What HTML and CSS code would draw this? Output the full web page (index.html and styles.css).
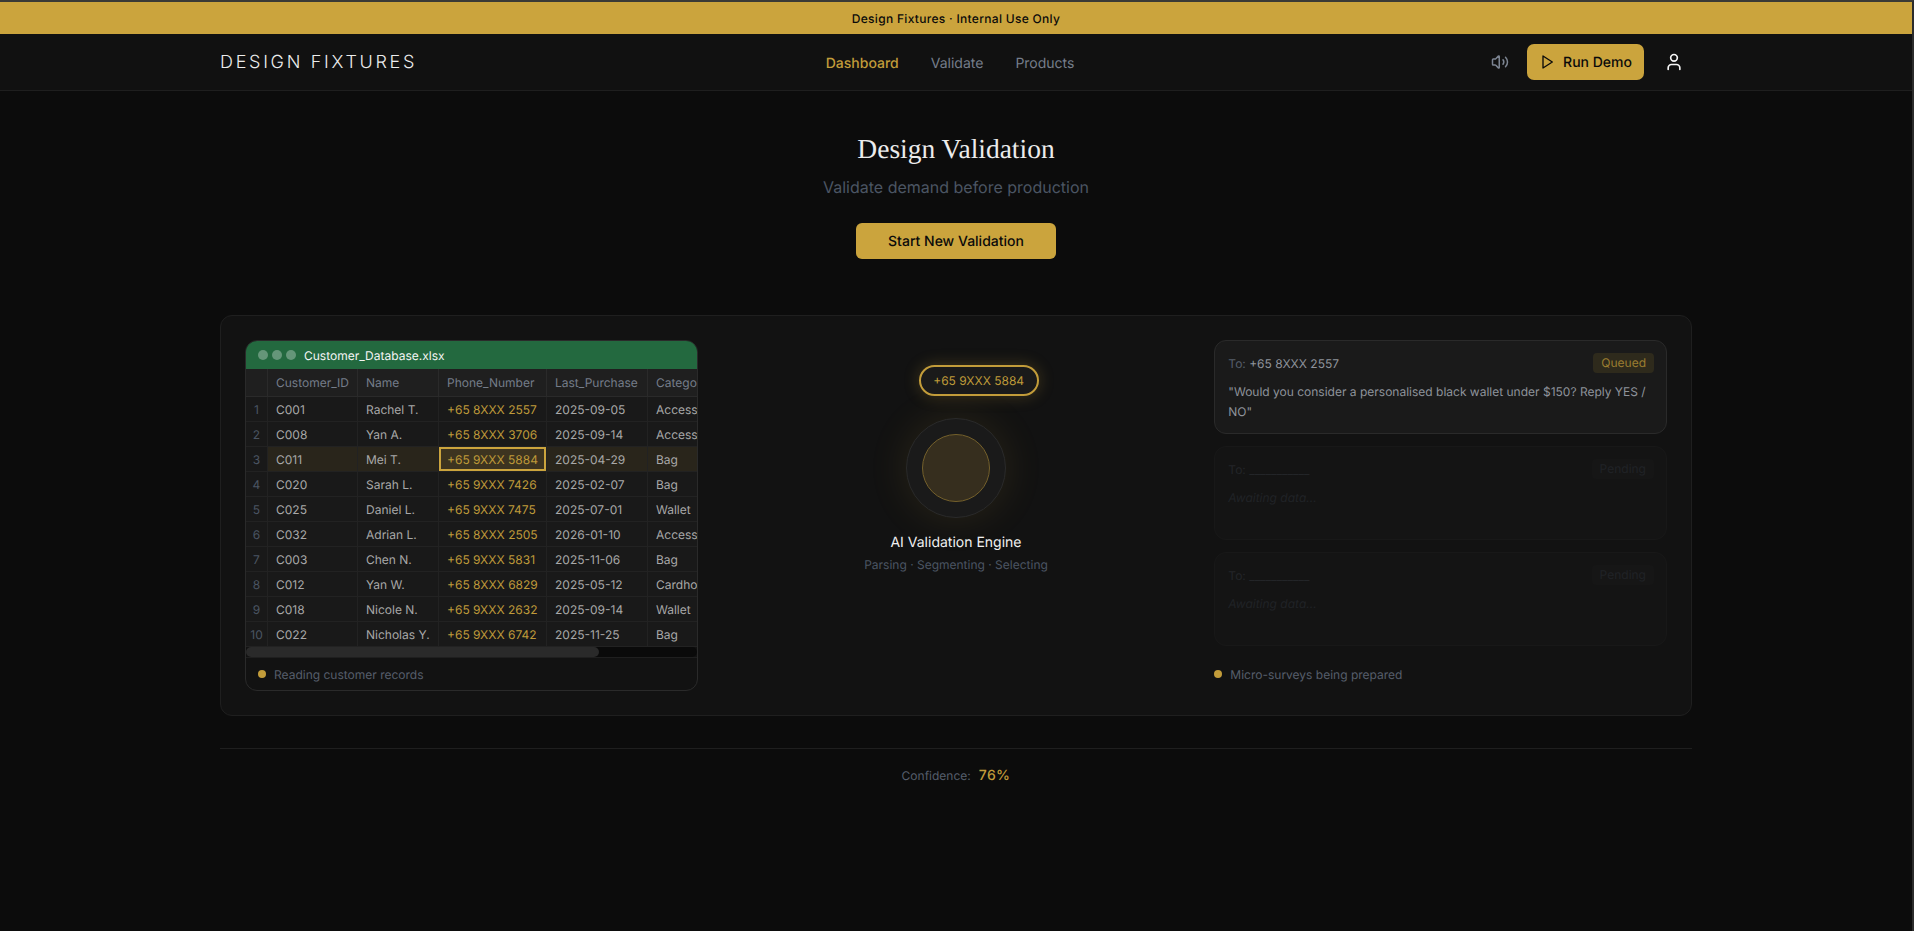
FILE: index.html
```html
<!DOCTYPE html>
<html lang="en">
<head>
<meta charset="utf-8">
<title>Design Validation</title>
<link rel="stylesheet" href="styles.css">
</head>
<body>
<div class="banner">Design Fixtures · Internal Use Only</div>
<header class="nav">
  <div class="nav-inner">
    <div class="logo">DESIGN FIXTURES</div>
    <nav class="links">
      <a class="link active">Dashboard</a>
      <a class="link">Validate</a>
      <a class="link">Products</a>
    </nav>
    <div class="actions">
      <span class="icon-btn sound">
        <svg class="ico18" viewBox="0 0 24 24"><path d="M11 4.702a.705.705 0 0 0-1.203-.498L6.413 7.587A1.4 1.4 0 0 1 5.416 8H3a1 1 0 0 0-1 1v6a1 1 0 0 0 1 1h2.416a1.4 1.4 0 0 1 .997.413l3.383 3.384A.705.705 0 0 0 11 19.298z"/><path d="M16 9a5 5 0 0 1 0 6"/><path d="M19.364 18.364a9 9 0 0 0 0-12.728"/></svg>
      </span>
      <button class="demo">
        <svg class="ico16" viewBox="0 0 24 24"><polygon points="6 3 20 12 6 21 6 3"/></svg>
        Run Demo
      </button>
      <span class="icon-btn user">
        <svg class="ico20" viewBox="0 0 24 24"><path d="M19 21v-2a4 4 0 0 0-4-4H9a4 4 0 0 0-4 4v2"/><circle cx="12" cy="7" r="4"/></svg>
      </span>
    </div>
  </div>
</header>
<main class="main">
  <section class="hero">
    <h1>Design Validation</h1>
    <p>Validate demand before production</p>
    <button class="start">Start New Validation</button>
  </section>
  <section class="panel">
    <div class="sheet">
      <div class="sheet-head">
        <span class="tl"></span><span class="tl"></span><span class="tl"></span>
        <span class="fname">Customer_Database.xlsx</span>
      </div>
      <div class="scroller">
        <table>
          <colgroup><col class="c0"><col class="c1"><col class="c2"><col class="c3"><col class="c4"><col class="c5"></colgroup>
          <thead><tr><th></th><th>Customer_ID</th><th>Name</th><th>Phone_Number</th><th>Last_Purchase</th><th>Category</th></tr></thead>
          <tbody>
            <tr><td class="n">1</td><td>C001</td><td>Rachel T.</td><td class="ph">+65 8XXX 2557</td><td>2025-09-05</td><td>Accessories</td></tr>
            <tr><td class="n">2</td><td>C008</td><td>Yan A.</td><td class="ph">+65 8XXX 3706</td><td>2025-09-14</td><td>Accessories</td></tr>
            <tr class="sel"><td class="n">3</td><td>C011</td><td>Mei T.</td><td class="ph cell">+65 9XXX 5884</td><td>2025-04-29</td><td>Bag</td></tr>
            <tr><td class="n">4</td><td>C020</td><td>Sarah L.</td><td class="ph">+65 9XXX 7426</td><td>2025-02-07</td><td>Bag</td></tr>
            <tr><td class="n">5</td><td>C025</td><td>Daniel L.</td><td class="ph">+65 9XXX 7475</td><td>2025-07-01</td><td>Wallet</td></tr>
            <tr><td class="n">6</td><td>C032</td><td>Adrian L.</td><td class="ph">+65 8XXX 2505</td><td>2026-01-10</td><td>Accessories</td></tr>
            <tr><td class="n">7</td><td>C003</td><td>Chen N.</td><td class="ph">+65 9XXX 5831</td><td>2025-11-06</td><td>Bag</td></tr>
            <tr><td class="n">8</td><td>C012</td><td>Yan W.</td><td class="ph">+65 8XXX 6829</td><td>2025-05-12</td><td>Cardholder</td></tr>
            <tr><td class="n">9</td><td>C018</td><td>Nicole N.</td><td class="ph">+65 9XXX 2632</td><td>2025-09-14</td><td>Wallet</td></tr>
            <tr><td class="n">10</td><td>C022</td><td>Nicholas Y.</td><td class="ph">+65 9XXX 6742</td><td>2025-11-25</td><td>Bag</td></tr>
          </tbody>
        </table>
      </div>
      <div class="hbar"><div class="hthumb"></div></div>
      <div class="sheet-foot status"><span class="dot"></span>Reading customer records</div>
    </div>
    <div class="engine">
      <div class="pill">+65 9XXX 5884</div>
      <div class="orb"><div class="core"></div></div>
      <div class="eng-title">AI Validation Engine</div>
      <div class="eng-sub">Parsing · Segmenting · Selecting</div>
    </div>
    <div class="cards">
      <div class="card">
        <div class="card-top"><span class="to">To: <span class="num">+65 8XXX 2557</span></span><span class="badge">Queued</span></div>
        <p class="msg">"Would you consider a personalised black wallet under $150? Reply YES / NO"</p>
      </div>
      <div class="card faded">
        <div class="card-top"><span class="to">To: ___________</span><span class="badge muted">Pending</span></div>
        <p class="msg wait">Awaiting data...</p>
      </div>
      <div class="card faded">
        <div class="card-top"><span class="to">To: ___________</span><span class="badge muted">Pending</span></div>
        <p class="msg wait">Awaiting data...</p>
      </div>
      <div class="status cards-status"><span class="dot"></span>Micro-surveys being prepared</div>
    </div>
  </section>
  <footer class="conf">
    <span class="conf-l">Confidence:</span><span class="conf-v">76%</span>
  </footer>
</main>
</body>
</html>
```

FILE: styles.css
```css
* { box-sizing: border-box; }
html, body { margin: 0; padding: 0; }
body {
  background: #0c0c0c;
  color: #e5e5e5;
  font-family: Inter, "Liberation Sans", sans-serif;
  text-rendering: geometricPrecision;
  height: 931px;
  overflow: hidden;
  border-top: 2px solid #3a3a36;
  border-right: 2px solid #2c2c2c;
}
.banner {
  height: 32px;
  background: #cba43d;
  color: #0a0a0a;
  font-size: 12px;
  font-weight: 500;
  letter-spacing: 0.3px;
  display: flex;
  align-items: center;
  justify-content: center;
}
.nav {
  height: 57px;
  background: #111111;
  border-bottom: 1px solid #1f1f1f;
}
.nav-inner {
  width: 1472px;
  height: 56px;
  margin: 0 auto;
  display: flex;
  align-items: center;
  justify-content: space-between;
}
.logo {
  font-size: 18px;
  font-weight: 300;
  letter-spacing: 2.7px;
  color: #ececec;
}
.links { display: flex; gap: 32px; margin: 2px 0 0 -1px; }
.link { font-size: 14px; font-weight: 400; color: #757d8a; }
.link.active { color: #c29c3a; font-weight: 500; }
.actions { display: flex; align-items: center; gap: 12px; }
.icon-btn { display: flex; align-items: center; justify-content: center; height: 36px; }
.sound { width: 32px; color: #7d8592; margin-right: -1px; }
.user { width: 36px; color: #f5f5f5; }
.ico16, .ico18, .ico20 { fill: none; stroke: currentColor; stroke-width: 2; stroke-linecap: round; stroke-linejoin: round; display: block; }
.ico16 { width: 16px; height: 16px; }
.ico18 { width: 18px; height: 18px; }
.ico20 { width: 20px; height: 20px; }
.demo {
  display: flex;
  align-items: center;
  gap: 8px;
  height: 36px;
  padding: 0 12px;
  border: 0;
  border-radius: 7px;
  background: #cba43d;
  color: #0a0a0a;
  font: 500 14px Inter, sans-serif;
  text-rendering: geometricPrecision;
}
.main { width: 1472px; margin: 0 auto; }
.hero { padding-top: 40px; display: flex; flex-direction: column; align-items: center; }
.hero h1 {
  margin: 0;
  font-family: "Liberation Serif", serif;
  font-weight: 400;
  font-size: 27.5px;
  line-height: 36px;
  color: #ececec;
}
.hero p {
  margin: 8px 0 0;
  font-size: 16px;
  line-height: 24px;
  color: #4b5563;
}
.start {
  margin-top: 24px;
  width: 200px;
  height: 36px;
  border: 0;
  border-radius: 6px;
  background: #cba43d;
  color: #0a0a0a;
  font: 500 14px Inter, sans-serif;
  text-rendering: geometricPrecision;
}
.panel {
  margin-top: 56px;
  height: 401px;
  padding: 24px;
  background: #121212;
  border: 1px solid #1f1f1f;
  border-radius: 12px;
  display: grid;
  grid-template-columns: repeat(3, minmax(0, 1fr));
  gap: 32px;
  align-items: start;
}
.sheet {
  height: 351px;
  background: #121212;
  border: 1px solid #2a2a2a;
  border-radius: 12px;
  overflow: hidden;
}
.sheet-head {
  height: 28px;
  background: #23693f;
  padding: 0 12px;
  display: flex;
  align-items: center;
  gap: 4px;
}
.tl { width: 10px; height: 10px; border-radius: 50%; background: rgba(255,255,255,0.3); }
.fname { margin-left: 4px; font-size: 12px; font-weight: 400; color: #f5f5f5; }
.scroller { overflow: hidden; height: 278px; }
.hbar { height: 10px; background: #0a0a0a; border-radius: 5px; }
.hthumb { width: 353px; height: 10px; background: #2a2a2a; border-radius: 5px; }
table {
  table-layout: fixed;
  width: 576px;
  border-collapse: separate;
  border-spacing: 0;
  font-size: 12px;
}
.c0 { width: 22px; }
.c1 { width: 90px; }
.c2 { width: 81px; }
.c3 { width: 108px; }
.c4 { width: 101px; }
.c5 { width: 174px; }
th, td {
  padding: 0 8px;
  text-align: left;
  white-space: nowrap;
  overflow: hidden;
  border-right: 1px solid #222222;
  border-bottom: 1px solid #222222;
  background: #191919;
}
th {
  height: 28px;
  background: #1f1f1f;
  font-weight: 400;
  color: #757d8a;
  border-bottom-color: #2a2a2a;
  border-right-color: #2a2a2a;
}
td { height: 25px; color: #a8a8a8; }
td.n { padding: 0; text-align: center; color: #4b5563; }
td.ph { color: #bf9a39; }
tr.sel td { background: #29251b; }
tr.sel td.n { background: #191919; }
tr.sel td.cell {
  background: #3d3420;
  box-shadow: inset 0 0 0 2px #cba43d;
}
.sheet-foot {
  height: 33px;
  padding: 0 12px;
  border-top: 1px solid #1f1f1f;
}
.status {
  display: flex;
  align-items: center;
  gap: 8px;
  font-size: 12px;
  color: #565e6b;
}
.dot { width: 8px; height: 8px; border-radius: 50%; background: #c29c3a; }
.engine {
  position: relative;
  height: 350px;
  padding-top: 78px;
  display: flex;
  flex-direction: column;
  align-items: center;
}
.pill {
  position: absolute;
  top: 25px;
  left: 189px;
  width: 120px;
  height: 31px;
  display: flex;
  align-items: center;
  justify-content: center;
  background: #1a1a1a;
  border: 2px solid #c29c3a;
  border-radius: 16px;
  box-shadow: 0 0 16px rgba(204,164,60,0.25);
  font-size: 12px;
  color: #bf9a39;
}
.orb {
  width: 100px;
  height: 100px;
  border-radius: 50%;
  background: #1a1a1a;
  border: 1px solid #2a2a2a;
  box-shadow: 0 0 40px rgba(204,164,60,0.12);
  display: flex;
  align-items: center;
  justify-content: center;
}
.core {
  width: 68px;
  height: 68px;
  border-radius: 50%;
  background: #362e1e;
  border: 1px solid #74602b;
}
.eng-title { margin-top: 15px; font-size: 14px; line-height: 20px; font-weight: 400; color: #f0f0f0; }
.eng-sub { margin-top: 4px; font-size: 12px; line-height: 16px; color: #4b5563; }
.cards { display: flex; flex-direction: column; gap: 12px; }
.card {
  height: 94px;
  padding: 12px 12px 12px 13px;
  background: #1a1a1a;
  border: 1px solid #2a2a2a;
  border-radius: 12px;
}
.card.faded { opacity: 0.25; }
.card-top { display: flex; align-items: center; justify-content: space-between; height: 20px; }
.to { font-size: 12px; color: #565e6b; }
.num { color: #8e939b; }
.badge {
  padding: 0 8px;
  height: 20px;
  line-height: 20px;
  border-radius: 4px;
  font-size: 12px;
  color: #9b7d30;
  background: #2e2a1c;
}
.badge.muted { color: #4b5563; background: #222222; }
.msg { margin: 9px 0 0; font-size: 12px; line-height: 20px; color: #8e939b; }
.msg.wait { font-style: italic; color: #4b5563; }
.cards-status { margin-top: 7px; height: 18px; }
.conf {
  margin-top: 32px;
  padding-top: 13px;
  border-top: 1px solid #1f1f1f;
  display: flex;
  align-items: center;
  justify-content: center;
  gap: 8px;
  height: 40px;
}
.conf-l { font-size: 12px; color: #565e6b; }
.conf-v { font-size: 14px; font-weight: 500; letter-spacing: 0.4px; color: #c29c3a; }
```
